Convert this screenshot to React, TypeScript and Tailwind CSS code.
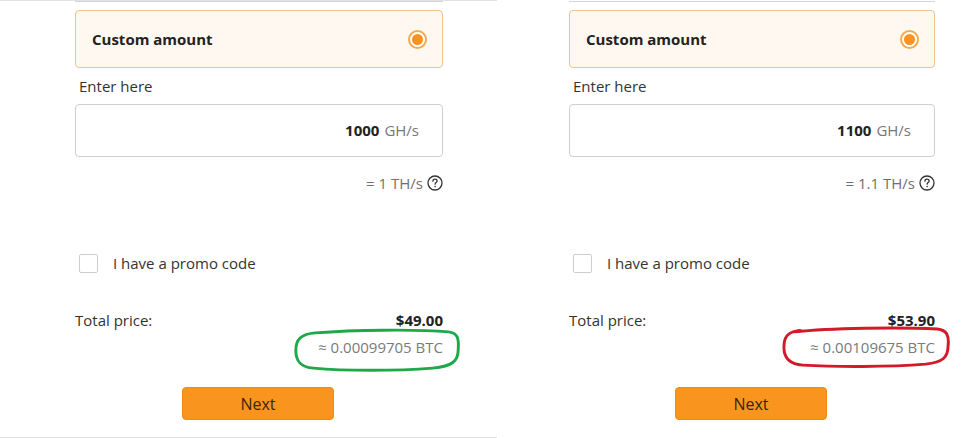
import React from "react";

type PanelProps = {
  amount: string;
  th: string;
  usd: string;
  btc: string;
  mark: "green" | "red";
  first: boolean;
};

function HelpIcon() {
  return (
    <svg width="16" height="16" viewBox="0 0 16 16" fill="none" className="shrink-0">
      <circle cx="8" cy="8" r="7" stroke="#333" strokeWidth="1.3" />
      <path
        d="M5.9 6.2c0-1.2 0.9-2 2.1-2s2.1 0.8 2.1 1.9c0 1.4-2 1.6-2 3.1"
        stroke="#333"
        strokeWidth="1.3"
        strokeLinecap="round"
      />
      <circle cx="8.1" cy="11.6" r="0.8" fill="#333" />
    </svg>
  );
}

function Scribble({ mark }: { mark: "green" | "red" }) {
  if (mark === "green") {
    return (
      <svg
        width="170"
        height="45"
        viewBox="0 0 172 46"
        fill="none"
        className="pointer-events-none absolute left-[-25px] top-[-9px]"
      >
        <path
          d="M22 5 C60 2 125 1 158 4 C167 5 169 10 168 22 C168 34 162 39 142 41 C104 44 52 44 20 41 C6 40 2 33 2 23 C2 12 7 6 22 5 Z"
          stroke="#1ea84a"
          strokeWidth="3"
          strokeLinejoin="round"
        />
      </svg>
    );
  }
  return (
    <svg
      width="174"
      height="43"
      viewBox="0 0 176 44"
      fill="none"
      className="pointer-events-none absolute left-[-30px] top-[-11px]"
    >
      <path
        d="M14 6 C50 2 120 1 160 3 C170 4 172 10 171 20 C171 32 166 37 148 39 C110 42 56 42 22 40 C8 39 3 32 3 22 C3 12 6 7 16 5 C20 4 24 5 14 6 Z"
        stroke="#d21a2a"
        strokeWidth="3"
        strokeLinejoin="round"
      />
    </svg>
  );
}

function Panel({ amount, th, usd, btc, mark, first }: PanelProps) {
  return (
    <div
      className={
        first
          ? "flex h-[438px] w-[497px] shrink-0 flex-col border-y border-[#e2e2e2] pl-[75px]"
          : "flex h-[438px] w-[483px] shrink-0 flex-col pl-[72px] pt-[1px]"
      }
    >
      <div className={first ? "flex w-[368px] flex-col" : "flex w-[366px] flex-col"}>
        {/* bottom edge of the option above */}
        <div className="h-[1px] rounded-b-[4px] border-x border-b border-[#d4d4d4]" />

        <div className="mt-[8px] flex h-[58px] items-center justify-between rounded-[4px] border border-[#e6c68c] bg-[#fff8f0] pl-[16px] pr-[15px]">
          <span className="text-[15px] font-bold text-[#222]">Custom amount</span>
          <span className="flex h-[19px] w-[19px] items-center justify-center rounded-full border-2 border-[#f2ab52] bg-white">
            <span className="h-[11px] w-[11px] rounded-full bg-[#f7931e]" />
          </span>
        </div>

        <div className="mt-[8px] pl-[4px] text-[15px] leading-[20px] text-[#333]">Enter here</div>

        <div className="mt-[8px] flex h-[53px] items-center justify-end rounded-[4px] border border-[#cfcfcf] bg-white pr-[23px] text-[15px]">
          <span className="font-bold text-[#222]">{amount}</span>
          <span className="ml-[5px] text-[#777]">GH/s</span>
        </div>

        <div className="mt-[16px] flex h-[20px] items-center justify-end gap-[4px] text-[15px] text-[#707070]">
          <span>{th}</span>
          <HelpIcon />
        </div>

        <div className="mt-[60px] flex h-[20px] items-center pl-[4px]">
          <span className="h-[19px] w-[19px] rounded-[2px] border border-[#cdcdcd] bg-white" />
          <span className="ml-[15px] text-[15px] text-[#333]">I have a promo code</span>
        </div>

        <div className="mt-[37px] flex h-[20px] items-center justify-between text-[15px]">
          <span className="text-[#333]">Total price:</span>
          <span className="font-bold text-[#222]">{usd}</span>
        </div>

        <div className="mt-[7px] flex h-[20px] justify-end">
          <span className="relative text-[15px] leading-[20px] text-[#7a7a7a]">
            {btc}
            <Scribble mark={mark} />
          </span>
        </div>

        <div className="mt-[30px] flex justify-center pr-[2px]">
          <button className="flex h-[33px] w-[152px] items-center justify-center rounded-[4px] border border-[#f08a10] bg-[#f9951f] text-[16px] text-[#3a2410]">
            Next
          </button>
        </div>
      </div>
    </div>
  );
}

export default function App() {
  return (
    <div
      className="flex h-[438px] w-[980px] overflow-hidden bg-white"
      style={{ fontFamily: '"Open Sans", "Noto Sans", sans-serif' }}
    >
      <Panel
        first
        amount="1000"
        th="= 1 TH/s"
        usd="$49.00"
        btc="≈ 0.00099705 BTC"
        mark="green"
      />
      <Panel
        first={false}
        amount="1100"
        th="= 1.1 TH/s"
        usd="$53.90"
        btc="≈ 0.00109675 BTC"
        mark="red"
      />
    </div>
  );
}
